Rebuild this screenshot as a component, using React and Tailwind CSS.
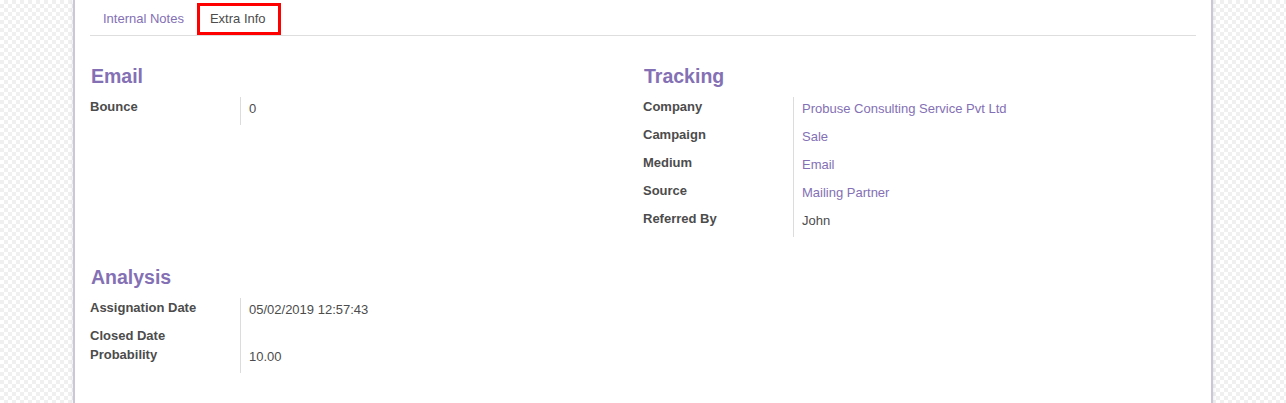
const tracking = [
  { label: "Company", value: "Probuse Consulting Service Pvt Ltd", link: true },
  { label: "Campaign", value: "Sale", link: true },
  { label: "Medium", value: "Email", link: true },
  { label: "Source", value: "Mailing Partner", link: true },
  { label: "Referred By", value: "John" },
];

const analysis = [
  { label: "Assignation Date", value: "05/02/2019 12:57:43" },
  { label: "Closed Date", value: "" },
  { label: "Probability", value: "10.00" },
];

const Field = ({ label, value, link }) => (
  <div className="flex items-stretch">
    <div className="w-[150px] shrink-0 font-bold leading-[19px] text-[#4c4c4c]">
      {label}
    </div>
    <div className="border-l border-[#dcdcdc] pl-[8px]">
      {value && (
        <div
          className={`pt-[2px] pb-[7px] leading-[19px] ${
            link ? "text-[#8470b4]" : "text-[#4c4c4c]"
          }`}
        >
          {value}
        </div>
      )}
    </div>
  </div>
);

const Group = ({ title, fields }) => (
  <div className="flex-1">
    <h2 className="mb-[9px] pl-px text-[19.5px] font-bold leading-[24px] text-[#8470b4]">
      {title}
    </h2>
    <div>
      {fields.map((f) => (
        <Field key={f.label} {...f} />
      ))}
    </div>
  </div>
);

export default function App() {
  return (
    <div
      className="min-h-[403px] h-screen overflow-hidden bg-white bg-[image:repeating-conic-gradient(#f0f0f0_0_25%,#ffffff_0_50%)] bg-[length:8px_8px] text-[13px]"
      style={{ fontFamily: '"Liberation Sans", Arial, sans-serif' }}
    >
      <div className="mx-auto h-full w-[1140px] border-x-2 border-[#cbc7d8] bg-white px-[15px] shadow-[0_0_4px_rgba(0,0,0,0.12)]">
        {/* Tabs */}
        <div className="flex items-start border-b border-[#dedede] pt-[3px]">
          <div className="px-[13px] py-[7px] leading-[18px] text-[#8470b4]">
            Internal Notes
          </div>
          <div className="-mb-px border-[3px] border-[#ff0000] bg-white pl-[10px] pr-[12px] pt-[4px] pb-[4px] leading-[18px] text-[#4c4c4c]">
            Extra Info
          </div>
        </div>

        <div className="mt-[28px] flex">
          <Group title="Email" fields={[{ label: "Bounce", value: "0" }]} />
          <Group title="Tracking" fields={tracking} />
        </div>

        <div className="mt-[28px] flex">
          <Group title="Analysis" fields={analysis} />
          <div className="flex-1" />
        </div>
      </div>
    </div>
  );
}
